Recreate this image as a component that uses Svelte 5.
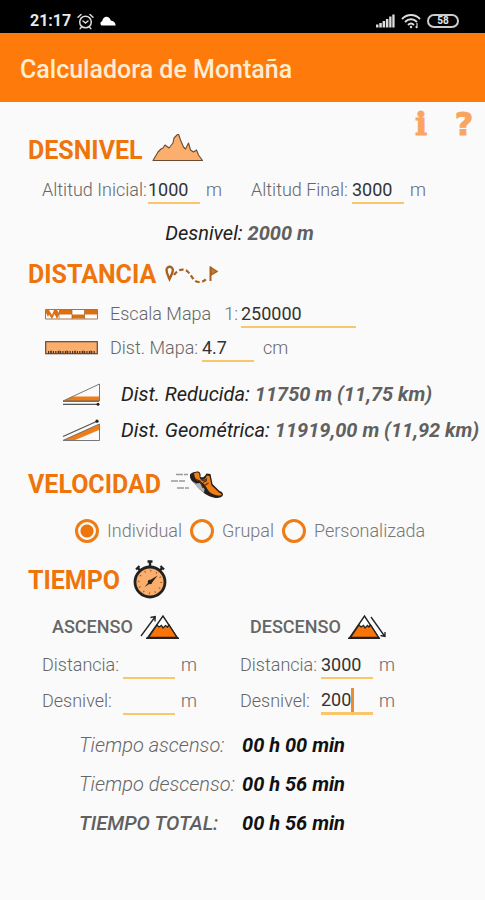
<script>
  let inicial = $state('1000');
  let final = $state('3000');
  let escala = $state('250000');
  let mapa = $state('4.7');
  let modo = $state('Individual');
  const modos = ['Individual', 'Grupal', 'Personalizada'];

  let ascenso = $state({ distancia: '', desnivel: '' });
  let descenso = $state({ distancia: '3000', desnivel: '200' });

  let desnivel = $derived(Number(final) - Number(inicial));
  let reducida = $derived((Number(escala) * Number(mapa)) / 100);
  let geometrica = $derived(Math.hypot(reducida, desnivel));

  const coma = (n) => n.toFixed(2).replace('.', ',');

  const tiempos = [
    { nombre: 'Tiempo ascenso:', valor: '00 h 00 min' },
    { nombre: 'Tiempo descenso:', valor: '00 h 56 min' },
    { nombre: 'TIEMPO TOTAL:', valor: '00 h 56 min', total: true }
  ];
</script>

<div class="app">
  <div class="status">
    <span class="clock">21:17</span>
    <svg width="17" height="17" viewBox="0 0 17 17" fill="none" stroke="#ddd" stroke-width="1.5" stroke-linecap="round">
      <circle cx="8.500" cy="9" r="5.800" />
      <path d="M1 4.200 4 1.500M16 4.200 13 1.500M6 8l2.500 2 2.500-2M4.500 14l-1.300 1.600M12.500 14l1.300 1.600" />
    </svg>
    <svg class="cloud" width="16" height="10" viewBox="0 0 16 10" fill="#fff">
      <path d="M2.500 9.500C0 9.500-.3 5.800 2.200 5.300 2.500 1.500 6.500-.8 9 1.800c1 .8 1.400 1.600 1.800 2.600 2.600.2 4.700 2.200 4.900 5.100z" />
    </svg>
    <span class="space"></span>
    <svg width="19" height="14" viewBox="0 0 19 14" fill="#ddd">
      <rect x="0" y="10.500" width="2.500" height="3" /><rect x="3.300" y="9" width="2.500" height="4.500" />
      <rect x="6.600" y="7" width="2.500" height="6.500" /><rect x="9.900" y="5" width="2.500" height="8.500" />
      <rect x="13.200" y="2.500" width="2.300" height="11" /><rect x="16.300" y="0.500" width="2.300" height="13" />
    </svg>
    <svg width="20" height="15" viewBox="0 0 20 15" fill="none" stroke="#ddd" stroke-width="1.900">
      <path d="M1 5C6-.3 14-.3 19 5M4 8c3.500-3.600 8.500-3.600 12 0M7 11c2-2 4-2 6 0" />
      <circle cx="10" cy="13" r="1.200" fill="#ddd" stroke="none" />
      <path d="M16 9v5M14.600 12.500 16 14" stroke-width="1.200" />
    </svg>
    <span class="battery">58</span>
  </div>

  <header><h1>Calculadora de Montaña</h1></header>

  <main>
    <div class="tools">
      <button aria-label="Información">i</button>
      <button class="help" aria-label="Ayuda">?</button>
    </div>

    <section>
      <h2 class="first">
        DESNIVEL
        <svg class="peaks" width="53" height="28" viewBox="0 0 53 28">
          <path d="M1 26.500 6 18l3-3 2-1 2-3 4 3 4-5 1-5 3-3 1.500-1 2 6 3 7 2 2 3-6 2 7 3 2 3-2 2 5 4 5.500z" fill="#fcae6c" stroke="#6b4a30" stroke-width="1.100" stroke-linejoin="round" />
        </svg>
      </h2>
      <div class="row altitudes">
        <div class="field">
          <label class="l-inicial" for="inicial">Altitud Inicial:</label>
          <input id="inicial" inputmode="decimal" bind:value={inicial} /><span class="unit">m</span>
        </div>
        <div class="field">
          <label class="l-final" for="final">Altitud Final:</label>
          <input id="final" inputmode="decimal" bind:value={final} /><span class="unit">m</span>
        </div>
      </div>
      <p class="result center">Desnivel: <b>{desnivel} m</b></p>
    </section>

    <section>
      <h2>
        DISTANCIA
        <svg class="route" width="53" height="20" viewBox="0 0 53 20" fill="none" stroke="#a9611f">
          <path d="M4.500 14C3 10.500 1.500 8 1.500 5a3.200 3.200 0 0 1 6.400 0C7.900 8 6 10.500 4.500 14z" stroke-width="2.400" />
          <path d="M9 10c3-5 9-7 13-4 5 4 6 11 12 11 4 0 6-1.500 8-4" stroke-width="2.200" stroke-dasharray="4.500 2.500" />
          <path d="M45.500 16V1.500" stroke-width="2" />
          <path d="M46 2.500 52 6.500 46 10z" fill="#c87932" stroke-width="1.400" />
        </svg>
      </h2>
      <div class="row map">
        <svg width="53" height="11" viewBox="0 0 53 11">
          <path d="M.5.500h52v9.500H.5z" fill="#fff" stroke="#9c7654" />
          <path d="M1 1h3l3 5 2-5h3l2 3V1h13v4.500H14L12 10 9.500 5 7 10 4 5.500 3 8 1 4zM27 5.500h12.500V9.500H27zM39.500 1H52v4.500H39.500z" fill="#dc6f10" />
          <path d="M14 5.200v4.500M27 1v9M39.500 1v9" stroke="#8d6543" stroke-width=".7" />
        </svg>
        <label class="l-escala" for="escala"><span>Escala Mapa</span><span>1:</span></label>
        <input id="escala" class="wide" inputmode="numeric" bind:value={escala} />
      </div>
      <div class="row map">
        <svg width="53" height="14" viewBox="0 0 53 14">
          <rect x=".7" y=".7" width="51.600" height="12" fill="#fcae6c" stroke="#5f4838" stroke-width="1.200" />
          <path d="M3 11.200h47" stroke="#4c3020" stroke-width="2.400" stroke-dasharray="1.200 1.200" />
          <path d="M6 9.500V12M14 9.500V12M22 9.500V12M30 9.500V12M38 9.500V12M46 9.500V12" stroke="#4c3020" />
        </svg>
        <label class="l-mapa" for="mapa">Dist. Mapa:</label>
        <input id="mapa" inputmode="decimal" bind:value={mapa} /><span class="unit far">cm</span>
      </div>
      <div class="distances">
        <p class="result">
          <svg width="39" height="23" viewBox="0 0 39 23">
            <path d="M1 18 10 13.500h27V18z" fill="#ee7d16" />
            <path d="M1 18 37.500 1v17z" fill="none" stroke="#777" />
            <path d="M1 18.300h36" stroke="#8a5425" />
            <path d="M1 21.300h35" stroke="#555" stroke-width="1.200" /><circle cx="36" cy="21.300" r="1.500" fill="#222" />
          </svg>
          <span>Dist. Reducida: <b>{reducida} m ({coma(reducida / 1000)} km)</b></span>
        </p>
        <p class="result">
          <svg width="39" height="23" viewBox="0 0 39 23">
            <path d="M1 21 37 5v6L12 21.500z" fill="#ee7d16" />
            <path d="M1 21.500 37.500 5v16.500z" fill="none" stroke="#777" />
            <path d="M1 17.500 35 2.200" stroke="#555" stroke-width="1.200" /><circle cx="35" cy="2.200" r="1.600" fill="#222" />
          </svg>
          <span>Dist. Geométrica: <b>{coma(geometrica)} m ({coma(geometrica / 1000)} km)</b></span>
        </p>
      </div>
    </section>

    <section class="speed">
      <h2>
        VELOCIDAD
        <svg class="shoe" width="53" height="29" viewBox="0 0 53 29">
          <path d="M6 3.500h12M1 10h14M7 17h12" stroke="#999" stroke-width="1.300" stroke-dasharray="7 1" />
          <path d="M20 4c0-2 4-3 7-3.500 3 0 4 2 3.500 5.500 2 1 4 0 6-3.500l4 .5 2 10 7 7c3 1 3.500 2 3.500 4-2 4-8 3.500-13 1.500-7-3-11-8-15-12.500-3-3-5.500-5-5-9z" fill="#25201e" />
          <path d="M23 3c2-1.500 5-2 6-1 1 3 0 5 2 6.500 2 1 4 0 6-4l2.500.5 2 9.500 7.500 7c2 1 3 1.500 2.500 2.500-3 1.500-8 0-12-3-3-4-5-9-10-11-3 0-5-3-5.500-7.500z" fill="#f27e17" />
          <path d="M21.500 9.500 28 17l6 5 .5-4-4.500-6-4 .5z" fill="#b5b5b8" />
          <path d="M31 8.500c2 1.500 4 1 6-1M33 11.500l4-2M34.500 14.500l4-2.500M25 8l5 2 3 7" fill="none" stroke="#47301f" stroke-width="1.100" />
        </svg>
      </h2>
      <div class="modes" role="radiogroup" aria-label="Velocidad">
        {#each modos as m}
          <label><input type="radio" name="modo" value={m} bind:group={modo} />{m}</label>
        {/each}
      </div>
    </section>

    <section class="time">
      <h2>
        TIEMPO
        <svg class="watch" width="34" height="39" viewBox="0 0 34 39">
          <path d="M17 2v5M14.500 1.500h5M4.500 7.500l3 3.500M29.500 7.500l-3 3.500" stroke="#222" stroke-width="2.400" />
          <path d="M3 9.500 6.500 6M31 9.500 27.500 6" stroke="#222" stroke-width="2.200" />
          <circle cx="17" cy="22" r="15" fill="#fcae6c" stroke="#222" stroke-width="2.800" />
          <circle cx="17" cy="22" r="11.300" fill="none" stroke="#8d5a31" stroke-width="1.800" stroke-dasharray="1 4.917" />
          <path d="M11.500 27 18 19.500 24.500 15.500 19.500 22z" fill="#222" />
          <circle cx="17" cy="22" r="2.300" fill="#222" />
        </svg>
      </h2>
      <div class="columns">
        <div>
          <h3>
            ASCENSO
            <svg width="39" height="26" viewBox="0 0 39 26">
              <path d="M1 22 15 3M10.500 3.500 15.200 2.500 15 7.500" fill="none" stroke="#222" stroke-width="1.300" />
              <path d="M7.500 24 23 2l14.500 22z" fill="#fff" stroke="#222" stroke-width="1.400" />
              <path d="M8.500 23.500 17 11l2 2 2.500-1.500L23 14l2.500-2.500L27.500 13l1.500-2 8 12.500z" fill="#f97507" stroke="#222" stroke-width="1.300" />
              <path d="M6 24.300h33" stroke="#222" stroke-width="1.400" />
            </svg>
          </h3>
          <div class="row field">
            <label class="l-time" for="asc-dist">Distancia:</label>
            <input id="asc-dist" inputmode="decimal" bind:value={ascenso.distancia} /><span class="unit">m</span>
          </div>
          <div class="row field">
            <label class="l-time" for="asc-desn">Desnivel:</label>
            <input id="asc-desn" inputmode="decimal" bind:value={ascenso.desnivel} /><span class="unit">m</span>
          </div>
        </div>
        <div>
          <h3>
            DESCENSO
            <svg width="39" height="26" viewBox="0 0 39 26">
              <path d="M23 3 36.500 22M32.500 21.500 37 22.500 37 18" fill="none" stroke="#222" stroke-width="1.300" />
              <path d="M1.500 24 16.500 2 31 24z" fill="#fff" stroke="#222" stroke-width="1.400" />
              <path d="M2.500 23.500 11 11l2 2 2.500-1.500L17 14l2.500-2.500L21 13l1.500-2 8 12.500z" fill="#f97507" stroke="#222" stroke-width="1.300" />
              <path d="M0 24.300h32" stroke="#222" stroke-width="1.400" />
            </svg>
          </h3>
          <div class="row field">
            <label class="l-time" for="des-dist">Distancia:</label>
            <input id="des-dist" inputmode="decimal" bind:value={descenso.distancia} /><span class="unit">m</span>
          </div>
          <div class="row field">
            <label class="l-time" for="des-desn">Desnivel:</label>
            <span class="active">
              <input id="des-desn" inputmode="decimal" bind:value={descenso.desnivel} />
              <i class="caret"></i>
            </span><span class="unit">m</span>
          </div>
        </div>
      </div>
      <dl>
        {#each tiempos as t}
          <div class:total={t.total}><dt>{t.nombre}</dt><dd>{t.valor}</dd></div>
        {/each}
      </dl>
    </section>
  </main>
</div>

<style>
  :global(body) { margin: 0; background: #fafafa; }
  .app {
    min-height: 100vh;
    background: #fafafa;
    color: #666;
    font: 18px/26px Roboto, sans-serif;
  }
  h1, h2, h3, p, dl, dd { margin: 0; }
  svg { flex: none; }
  .status {
    display: flex;
    align-items: center;
    gap: 6px;
    height: 33px;
    padding: 9px 26px 0 30px;
    box-sizing: border-box;
    background: #000;
    color: #e8e8e8;
  }
  .clock { font-size: 16px; font-weight: 700; line-height: 24px; }
  .space { flex: 1; }
  .battery {
    width: 32px;
    height: 14px;
    box-sizing: border-box;
    border: 2px solid #ccc;
    border-radius: 7px;
    font-size: 10px;
    font-weight: 700;
    line-height: 10px;
    text-align: center;
  }
  header {
    display: flex;
    align-items: center;
    height: 69px;
    padding: 4px 20px 0;
    box-sizing: border-box;
    background: #fe7a0a;
    color: #ffedd2;
  }
  h1 { font-size: 25px; font-weight: 500; line-height: 32px; }
  .tools {
    display: flex;
    justify-content: flex-end;
    gap: 21px;
    height: 33px;
    padding: 6px 10px 0 0;
    box-sizing: border-box;
  }
  button {
    width: 22px;
    height: 32px;
    padding: 0;
    border: 0;
    background: none;
    color: #f9a55f;
    font: 700 32px/32px "DejaVu Serif", serif;
    -webkit-text-stroke: 1px #f9a55f;
  }
  .help { font-family: "DejaVu Sans", sans-serif; }
  h2 {
    display: flex;
    align-items: center;
    gap: 9px;
    height: 44px;
    padding-left: 28px;
    color: #ee740c;
    font-size: 25px;
    font-weight: 700;
  }
  .first { height: 32px; }
  .peaks { margin-bottom: 7px; }
  .watch { margin: 0 0 4px 4px; }
  .row { display: flex; align-items: center; }
  .altitudes {
    display: grid;
    grid-template-columns: 209fr 234fr;
    height: 46px;
    padding-left: 42px;
  }
  .field { display: flex; align-items: center; }
  label, .unit { font-weight: 300; white-space: nowrap; }
  .l-inicial { width: 106px; }
  .l-final { width: 101px; }
  .l-time { width: 81px; }
  .l-escala { display: flex; gap: 13px; width: 131px; }
  .l-mapa { width: 92px; }
  input {
    width: 52px;
    height: 28px;
    box-sizing: border-box;
    padding: 0;
    border: 0;
    border-bottom: 2px solid #fbc66a;
    border-radius: 0;
    outline: 0;
    background: none;
    color: #333;
    font: 18px/26px Roboto, sans-serif;
  }
  .wide { width: 115px; }
  .unit { margin-left: 6px; }
  .far { margin-left: 9px; }
  .map { height: 34px; padding-left: 45px; }
  .map svg { margin-right: 12px; }
  .result { font-size: 20px; font-style: italic; color: #222; white-space: nowrap; }
  .result b { color: #606060; font-weight: 700; }
  .center { height: 40px; padding-right: 6px; line-height: 40px; text-align: center; }
  .distances { padding: 11px 0 0 62px; }
  .distances .result { display: flex; align-items: center; gap: 20px; height: 36px; }
  .speed { margin-top: 15px; }
  .modes { display: flex; gap: 8px; height: 48px; padding-left: 75px; }
  .modes label { display: flex; align-items: center; gap: 8px; color: #777; }
  input[type='radio'] {
    appearance: none;
    width: 24px;
    height: 24px;
    margin: 0;
    border: 3px solid #ee7d16;
    border-radius: 50%;
  }
  input[type='radio']:checked { background: radial-gradient(circle, #ee740c 6px, transparent 7px); }
  .time { margin-top: 4px; }
  .columns { display: grid; grid-template-columns: 198fr 245fr; padding-left: 42px; }
  h3 {
    display: flex;
    align-items: center;
    gap: 7px;
    height: 44px;
    padding: 4px 0 0 10px;
    box-sizing: border-box;
    color: #666;
    font-size: 18px;
    font-weight: 500;
  }
  .columns .row { height: 36px; }
  .active { position: relative; display: flex; }
  .active input { border-bottom-width: 3px; }
  .caret {
    position: absolute;
    left: 30px;
    top: 1px;
    width: 3px;
    height: 24px;
    background: #ee8a30;
  }
  dl { padding: 6px 0 0 79px; font-size: 20px; font-style: italic; }
  dl div { display: flex; align-items: center; height: 39px; }
  dt { width: 163px; font-weight: 300; white-space: nowrap; }
  dd { color: #111; font-weight: 700; }
  .total dt { color: #606060; font-weight: 500; }
</style>
